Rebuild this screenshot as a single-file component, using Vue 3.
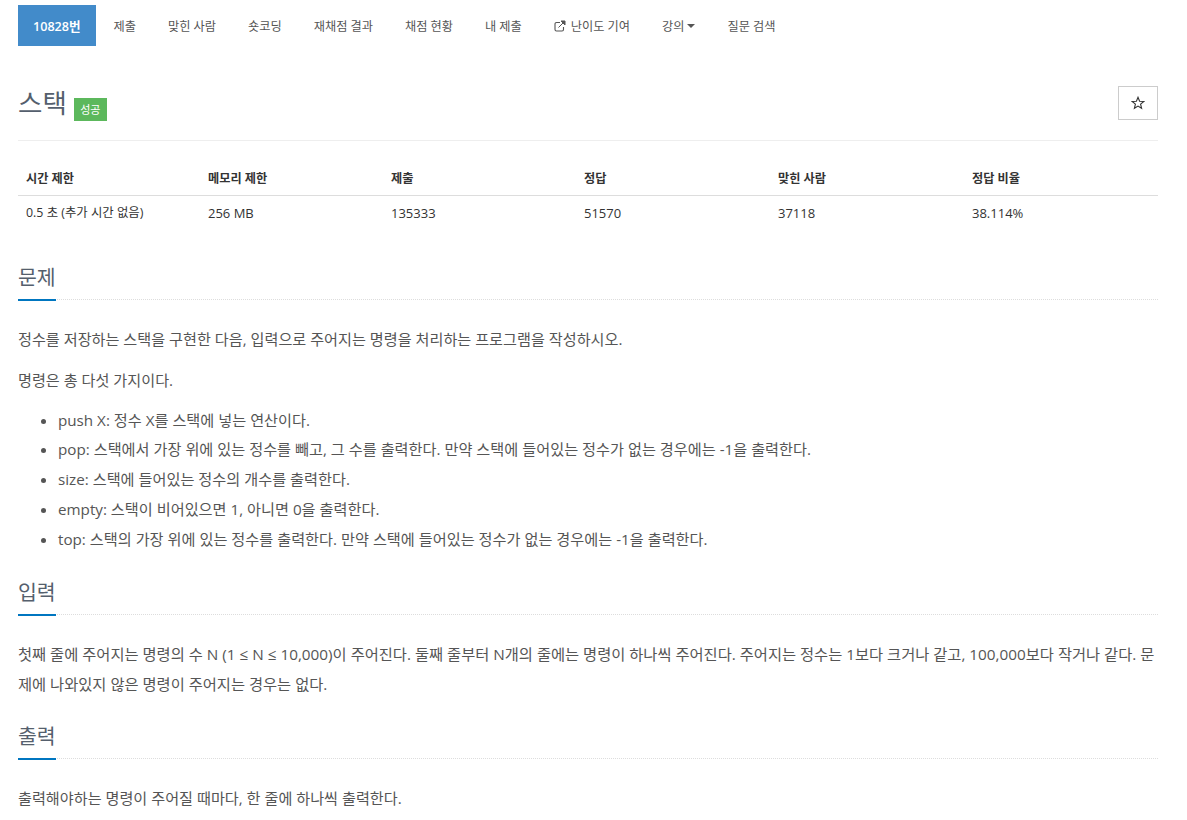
<script setup>
const navItems = [
  { label: '10828번', active: true },
  { label: '제출' },
  { label: '맞힌 사람' },
  { label: '숏코딩' },
  { label: '재채점 결과' },
  { label: '채점 현황' },
  { label: '내 제출' },
  { label: '난이도 기여', external: true },
  { label: '강의', caret: true },
  { label: '질문 검색' },
]
const heads = ['시간 제한', '메모리 제한', '제출', '정답', '맞힌 사람', '정답 비율']
const cells = ['0.5 초 (추가 시간 없음)', '256 MB', '135333', '51570', '37118', '38.114%']
const commands = [
  'push X: 정수 X를 스택에 넣는 연산이다.',
  'pop: 스택에서 가장 위에 있는 정수를 빼고, 그 수를 출력한다. 만약 스택에 들어있는 정수가 없는 경우에는 -1을 출력한다.',
  'size: 스택에 들어있는 정수의 개수를 출력한다.',
  'empty: 스택이 비어있으면 1, 아니면 0을 출력한다.',
  'top: 스택의 가장 위에 있는 정수를 출력한다. 만약 스택에 들어있는 정수가 없는 경우에는 -1을 출력한다.',
]
</script>

<template>
  <div class="page">
    <ul class="nav">
      <li v-for="item in navItems" :key="item.label" class="nav-item" :class="{ active: item.active }">
        <svg v-if="item.external" class="ext" viewBox="0 0 12 12" width="12" height="12">
          <path d="M9.5 7v2.5a1.5 1.5 0 0 1-1.5 1.5H2.5A1.5 1.5 0 0 1 1 9.500V4a1.500 1.500 0 0 1 1.500-1.500H6" fill="none" stroke="#555" stroke-width="1.100" />
          <path d="M4.500 7.500 10 2M7 1h4v4z" fill="#555" stroke="#555" stroke-width="1" />
        </svg>
        <span>{{ item.label }}</span>
        <span v-if="item.caret" class="caret"></span>
      </li>
    </ul>

    <div class="title-row">
      <h1 class="title">스택 <span class="badge">성공</span></h1>
      <button class="star" type="button">
        <svg viewBox="0 0 14 14" width="14" height="14">
          <path d="M7 1.300 8.600 5.200 12.800 5.500 9.600 8.200 10.600 12.300 7 10.100 3.400 12.300 4.400 8.200 1.200 5.500 5.400 5.200Z" fill="none" stroke="#333" stroke-width="1.100" />
        </svg>
      </button>
    </div>

    <table class="info">
      <colgroup>
        <col class="col-a" /><col class="col-b" /><col class="col-c" />
        <col class="col-d" /><col class="col-d" /><col />
      </colgroup>
      <thead>
        <tr><th v-for="h in heads" :key="h">{{ h }}</th></tr>
      </thead>
      <tbody>
        <tr><td v-for="c in cells" :key="c">{{ c }}</td></tr>
      </tbody>
    </table>

    <section class="section first">
      <div class="headline"><h2>문제</h2></div>
      <div class="body">
        <p>정수를 저장하는 스택을 구현한 다음, 입력으로 주어지는 명령을 처리하는 프로그램을 작성하시오.</p>
        <p>명령은 총 다섯 가지이다.</p>
        <ul class="cmds">
          <li v-for="c in commands" :key="c">{{ c }}</li>
        </ul>
      </div>
    </section>

    <section class="section">
      <div class="headline"><h2>입력</h2></div>
      <div class="body">
        <p class="long">첫째 줄에 주어지는 명령의 수 N (1 ≤ N ≤ 10,000)이 주어진다. 둘째 줄부터 N개의 줄에는 명령이 하나씩 주어진다. 주어지는 정수는 1보다 크거나 같고, 100,000보다 작거나 같다. 문제에 나와있지 않은 명령이 주어지는 경우는 없다.</p>
      </div>
    </section>

    <section class="section">
      <div class="headline"><h2>출력</h2></div>
      <div class="body">
        <p>출력해야하는 명령이 주어질 때마다, 한 줄에 하나씩 출력한다.</p>
      </div>
    </section>
  </div>
</template>

<style>
html, body {
  background: #fff;
  overflow: hidden;
}
</style>

<style scoped>
.page {
  width: 1140px;
  margin-left: 18px;
  padding-top: 5px;
  font-family: "Open Sans", "Noto Sans CJK KR", sans-serif;
  color: #333;
}

.nav {
  display: flex;
  gap: 2px;
  list-style: none;
  margin: 0;
  padding: 0;
  height: 41px;
}

.nav-item {
  display: flex;
  align-items: center;
  padding: 0 15px;
  font-size: 12.200px;
  color: #555;
}

.nav-item.active {
  margin-right: 1px;
  background: #428bca;
  color: #fff;
  font-size: 12.600px;
  font-weight: 600;
}

.ext {
  margin-right: 5px;
}

.caret {
  display: inline-block;
  margin-left: 3px;
  border-top: 4px solid #555;
  border-left: 4px solid transparent;
  border-right: 4px solid transparent;
}

.title-row {
  display: flex;
  justify-content: space-between;
  align-items: flex-end;
  margin-top: 40px;
  padding-bottom: 20px;
  border-bottom: 1px solid #eee;
}

.title {
  margin: 0;
  height: 34px;
  font-size: 26.500px;
  line-height: 34px;
  font-weight: 400;
  color: #555f6d;
}

.badge {
  display: inline-block;
  vertical-align: -1px;
  background: #5cb85c;
  color: #fff;
  font-size: 11px;
  line-height: 23px;
  height: 23px;
  padding: 0 6.500px;
}

.star {
  display: flex;
  align-items: center;
  justify-content: center;
  width: 40px;
  height: 34px;
  padding: 0;
  background: #fff;
  border: 1px solid #ccc;
}

.info {
  width: 100%;
  margin-top: 20px;
  border-collapse: collapse;
  table-layout: fixed;
  font-size: 13px;
}

.col-a {
  width: 182px;
}

.col-b {
  width: 183px;
}

.col-c {
  width: 193px;
}

.col-d {
  width: 194px;
}

.info th {
  padding: 9px 8px 7px;
  line-height: 18px;
  font-size: 12.200px;
  text-align: left;
  font-weight: 700;
  border-bottom: 1px solid #ddd;
}

.info td {
  padding: 8px 8px 9px;
  line-height: 18px;
}

.info td:first-child {
  font-size: 12.400px;
}

.section {
  margin-top: 17.500px;
}

.section.first {
  margin-top: 26px;
}

.headline {
  border-bottom: 1px dotted #ddd;
  height: 42px;
}

.headline h2 {
  display: inline-block;
  margin: 0;
  height: 42px;
  width: 38px;
  font-size: 20.500px;
  line-height: 40px;
  font-weight: 400;
  color: #555f6d;
  border-bottom: 2px solid #0076c0;
}

.body {
  margin-top: 24px;
  font-size: 15.150px;
  line-height: 30px;
  color: #555;
  word-break: break-all;
}

.body p {
  margin: 0 0 10.500px;
}

.body .long {
  font-size: 15.300px;
}

.cmds {
  margin: 0;
  padding: 0.500px 0 0 40px;
}

.cmds li {
  font-size: 15.200px;
  line-height: 29.750px;
}
</style>
